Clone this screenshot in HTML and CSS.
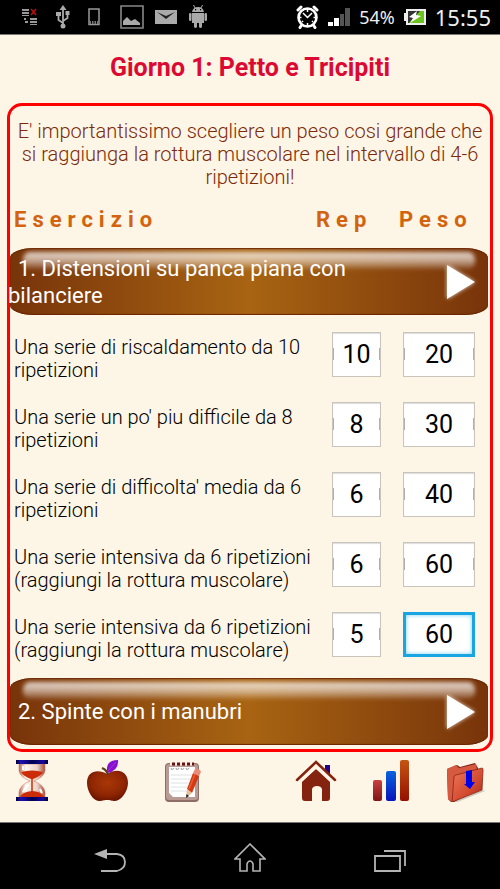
FILE: index.html
```html
<!DOCTYPE html>
<html lang="it">
<head>
  <meta charset="UTF-8" />
  <meta name="viewport" content="width=device-width, initial-scale=1.0"/>
  <title>Giorno 1: Petto e Tricipiti</title>
  <link rel="stylesheet" href="styles.css">
</head>
<body>
  <header class="status-bar">
    <div class="status-left">
      <div class="status-group system-icons">
        <svg width="16" height="18" viewBox="0 0 16 18"><path fill="#999" d="M0 1h7v2H0zM0 4h7v2H0zM0 7h7v1H0zM8 10h7v2H8zM8 13h7v2H8zM8 16h7v1H8zM2 10h2v2H2zM3 13h3v2H3z"/><path stroke="#b01010" stroke-width="1.6" d="M9 1l5 6M14 1L9 7"/></svg>
        <svg width="14" height="24" viewBox="0 0 14 24"><path fill="none" stroke="#aaa" stroke-width="1.8" d="M7 3v18M7 18L2.500 15V9M7 16l4.500-3V8"/><path fill="#aaa" d="M7 0l3.500 5h-7zM0 7h5v4H0zM9.500 6h4v4h-4z"/><circle cx="7" cy="21" r="2.500" fill="#aaa"/></svg>
        <svg width="12" height="18" viewBox="0 0 12 18"><path fill="none" stroke="#999" stroke-width="1.500" d="M1 1h10v15.500H1z"/><path fill="#777" d="M1 13h2v3H1zM4 13h1.500v3H4zM6.500 13H8v3H6.500zM9 13h2v3H9z"/></svg>
      </div>
      <div class="status-group notification-icons">
        <svg width="24" height="24" viewBox="0 0 24 24"><path fill="none" stroke="#888" stroke-width="1.600" d="M1 1h22v22H1z"/><path fill="#aaa" d="M3 20v-4l4-4 4 4 4-2 5 4v2z"/></svg>
        <svg width="22" height="16" viewBox="0 0 22 16"><path fill="#aaa" d="M0 1h22v14H0z"/><path fill="#222" d="M2 3l9 7 9-7-9 4z"/></svg>
        <svg width="20" height="24" viewBox="0 0 20 24"><path fill="#aaa" d="M4 8h12v10H4zM6 17h3v5q-1.500 2-3 0zM11 17h3v5q-1.500 2-3 0zM4 7q1-5 6-5t6 5z"/><rect x="1" y="8" width="2.500" height="8" rx="1.200" fill="#aaa"/><rect x="16.500" y="8" width="2.500" height="8" rx="1.200" fill="#aaa"/><path stroke="#aaa" d="M7 3L5.500 0M13 3l1.500-3"/><path fill="#000" d="M7 4h1.200v1.200H7zM12 4h1.200v1.200H12z"/></svg>
      </div>
    </div>
    <div class="status-group status-right">
      <svg width="23" height="24" viewBox="0 0 23 24"><circle cx="11.500" cy="12.500" r="9" fill="none" stroke="#fff" stroke-width="2.600"/><path fill="none" stroke="#fff" stroke-width="3" stroke-linecap="round" d="M2 5l3-3M21 5l-3-3M5 21l-1 1.500M18 21l1 1.500"/><path fill="none" stroke="#fff" stroke-width="1.500" d="M7 8l4.500 4.500L16 8M11.500 4v3M11.500 18v3M3 12.500h2.500M17.500 12.500H20M6 17l1-1M17 17l-1-1"/></svg>
      <svg width="22" height="20" viewBox="0 0 22 20"><path fill="#fff" d="M0 15h5v4H0zM6 11h5v8H6z"/><path fill="#555" d="M12 7h4v12h-4zM17 1h5v18h-5z"/></svg>
      <span class="battery-level">54%</span>
      <svg width="22" height="16" viewBox="0 0 22 16"><path fill="#eee" d="M2 0h20v16H2zM0 4h2v8H0z"/><path fill="#333" d="M4 2h16v12H4z"/><path fill="#6cc51c" d="M20 2v12H5L16 2z"/><path fill="#fff" d="M13 2l-8 6 4 1-3 5 11-7-5-1z"/></svg>
      <span class="clock">15:55</span>
    </div>
  </header>

  <main>
    <h1 class="page-title">Giorno 1: Petto e Tricipiti</h1>

    <section class="workout">
      <p class="intro">E' importantissimo scegliere un peso cosi grande che si raggiunga la rottura muscolare nel intervallo di 4-6 ripetizioni!</p>

      <table class="exercises">
        <thead>
          <tr>
            <th class="col-name">Esercizio</th>
            <th class="col-rep">Rep</th>
            <th class="col-weight">Peso</th>
          </tr>
        </thead>
        <tbody>
          <tr class="title-row">
            <td colspan="3">
              <button type="button" class="exercise-btn">
                <span class="exercise-name">1. Distensioni su panca piana con bilanciere</span>
                <svg class="arrow" width="28" height="36" viewBox="0 0 28 36"><path fill="#fff" d="M0 1l28 17L0 35z"/></svg>
              </button>
            </td>
          </tr>
          <tr class="set-row">
            <td class="set-name" id="set1">Una serie di riscaldamento da 10 ripetizioni</td>
            <td class="set-rep"><input type="text" class="rep-input" value="10" aria-labelledby="set1"></td>
            <td class="set-weight"><input type="text" class="weight-input" value="20" aria-labelledby="set1"></td>
          </tr>
          <tr class="set-row">
            <td class="set-name" id="set2">Una serie un po' piu difficile da 8 ripetizioni</td>
            <td class="set-rep"><input type="text" class="rep-input" value="8" aria-labelledby="set2"></td>
            <td class="set-weight"><input type="text" class="weight-input" value="30" aria-labelledby="set2"></td>
          </tr>
          <tr class="set-row">
            <td class="set-name" id="set3">Una serie di difficolta' media da 6 ripetizioni</td>
            <td class="set-rep"><input type="text" class="rep-input" value="6" aria-labelledby="set3"></td>
            <td class="set-weight"><input type="text" class="weight-input" value="40" aria-labelledby="set3"></td>
          </tr>
          <tr class="set-row">
            <td class="set-name" id="set4">Una serie intensiva da 6 ripetizioni (raggiungi la rottura muscolare)</td>
            <td class="set-rep"><input type="text" class="rep-input" value="6" aria-labelledby="set4"></td>
            <td class="set-weight"><input type="text" class="weight-input" value="60" aria-labelledby="set4"></td>
          </tr>
          <tr class="set-row">
            <td class="set-name" id="set5">Una serie intensiva da 6 ripetizioni (raggiungi la rottura muscolare)</td>
            <td class="set-rep"><input type="text" class="rep-input" value="5" aria-labelledby="set5"></td>
            <td class="set-weight"><input type="text" class="weight-input active" value="60" aria-labelledby="set5"></td>
          </tr>
          <tr class="title-row">
            <td colspan="3">
              <button type="button" class="exercise-btn">
                <span class="exercise-name">2. Spinte con i manubri</span>
                <svg class="arrow" width="28" height="36" viewBox="0 0 28 36"><path fill="#fff" d="M0 1l28 17L0 35z"/></svg>
              </button>
            </td>
          </tr>
        </tbody>
      </table>
    </section>

    <div class="toolbar">
      <div class="tools">
        <button type="button" class="tool-btn" aria-label="Timer">
          <svg width="42" height="42" viewBox="0 0 42 42">
            <defs>
              <linearGradient id="cap"><stop offset="0" stop-color="#000030"/><stop offset=".15" stop-color="#2010b8"/><stop offset=".5" stop-color="#000050"/><stop offset=".85" stop-color="#1808a0"/><stop offset="1" stop-color="#000020"/></linearGradient>
              <linearGradient id="glass"><stop offset="0" stop-color="#b9654f"/><stop offset=".25" stop-color="#fff5ee"/><stop offset=".7" stop-color="#ecd3c8"/><stop offset="1" stop-color="#a84a35"/></linearGradient>
            </defs>
            <path fill="url(#glass)" stroke="#c8806c" stroke-width=".6" d="M8 4h26v7q-1 6-11 10 10 4 11 11v6H8v-6q1-7 11-11Q9 17 8 11z"/>
            <path fill="#cc2d08" d="M10 12q11-3 22 0-2 4-10 7h-2q-8-3-10-7zM9 37q2-5 12-6 9 0 12 6z"/>
            <path stroke="#cc2d08" stroke-width="1.500" d="M21 18v14"/>
            <path fill="none" stroke="#fff" stroke-width="2" d="M12 6v4M12 32q2-5 6-7M29 29l2 4"/>
            <path fill="url(#cap)" d="M5 0h32v4H5zM5 37h32v4H5z"/>
          </svg>
        </button>
        <button type="button" class="tool-btn" aria-label="Dieta">
          <svg width="42" height="42" viewBox="0 0 42 42">
            <defs><radialGradient id="apple" cx=".5" cy=".4" r=".65"><stop offset="0" stop-color="#a93708"/><stop offset=".6" stop-color="#902703"/><stop offset="1" stop-color="#651200"/></radialGradient></defs>
            <path fill="url(#apple)" d="M21 14C30 8 42 10 42 23c0 8-7 18-13 18-4 0-4-1-8-1s-4 1-8 1C7 41 1 31 1 23 1 10 13 9 21 14z"/>
            <path fill="none" stroke="#59411a" stroke-width="2.200" d="M16 8q5 2 6 7"/>
            <path fill="#8711cf" d="M21 11Q20 0 32 0q1 11-11 13z"/>
            <path stroke="#a84ae0" stroke-width=".7" d="M22 11l8-9"/>
          </svg>
        </button>
        <button type="button" class="tool-btn" aria-label="Note">
          <svg width="42" height="42" viewBox="0 0 42 42">
            <rect x="4" y="3" width="34" height="39" rx="4" fill="#8d6d66"/>
            <rect x="5" y="4" width="32" height="36" rx="3" fill="#b99b94"/>
            <path fill="#fff" d="M8 7h26v30H12l-4-4z"/>
            <path stroke="#dde0e2" d="M10 15h22M10 19h22M10 23h22M10 27h22M10 31h22"/>
            <path stroke="#f8eeea" stroke-width="3" stroke-dasharray="3 2" d="M9 4h25"/>
            <path stroke="#691010" stroke-width="3" stroke-dasharray="3 2" d="M11 4h22"/>
            <path fill="none" stroke="#aaa" stroke-width="1.200" d="M10 8q1 3 3 0M15 8q1 3 3 0M20 8q1 3 3 0M25 8q1 3 3 0"/>
            <path fill="#d13a12" d="M26 29l6-16 6 3-7 17z"/>
            <path fill="#e98b76" d="M32 13l2-4q4-1 6 3l-2 4z"/>
            <path stroke="#f05c32" stroke-width="1.500" d="M28 29l6-15"/>
            <path fill="#e5bf98" d="M26 29l5 4-6 5z"/><path fill="#222" d="M25.500 34l2.500 2-3 2z"/>
          </svg>
        </button>
      </div>
      <div class="tools">
        <button type="button" class="tool-btn" aria-label="Home">
          <svg width="42" height="42" viewBox="0 0 42 42">
            <path fill="#842310" d="M21 9l14 12v17q0 3-3 3h-5V29q-1-3-5-3t-5 3v12h-7q-3 0-3-3V21z"/>
            <path fill="none" stroke="#fdf5e6" stroke-width="7" d="M3 21L21 4l18 17"/>
            <path fill="#220088" d="M30 5h5v10l-5-5z"/>
            <path fill="none" stroke="#842310" stroke-width="2.500" stroke-linecap="round" d="M2 20L21 2l19 18"/>
          </svg>
        </button>
        <button type="button" class="tool-btn" aria-label="Statistiche">
          <svg width="42" height="42" viewBox="0 0 42 42">
            <defs>
              <linearGradient id="bar1" x2="0" y2="1"><stop stop-color="#c94040"/><stop offset="1" stop-color="#801515"/></linearGradient>
              <linearGradient id="bar2" x2="0" y2="1"><stop stop-color="#0864df"/><stop offset="1" stop-color="#0814ba"/></linearGradient>
              <linearGradient id="bar3" x2="0" y2="1"><stop stop-color="#c45512"/><stop offset="1" stop-color="#951000"/></linearGradient>
            </defs>
            <rect x="3" y="20" width="9" height="21" rx="2" fill="url(#bar1)"/>
            <rect x="16" y="11" width="10" height="30" rx="2" fill="url(#bar2)"/>
            <rect x="30" y="0" width="9" height="41" rx="2" fill="url(#bar3)"/>
          </svg>
        </button>
        <button type="button" class="tool-btn" aria-label="Salva">
          <svg width="42" height="42" viewBox="0 0 42 42">
            <defs><linearGradient id="folder" x2="1" y2="1"><stop stop-color="#f07a5c"/><stop offset=".6" stop-color="#d34a30"/><stop offset="1" stop-color="#a02a18"/></linearGradient></defs>
            <path fill="#000" opacity=".18" d="M8 41l30-11 2 1-30 12z"/>
            <path fill="#762015" d="M2 9l10-4 3 2 15-4 3 5 1 20L7 43l-4-4z"/>
            <path fill="#d65a40" d="M2 9l9-4 3 3 17-4 1 5-22 7-3 26-4-3z"/>
            <path fill="url(#folder)" stroke="#8b2515" stroke-width=".8" d="M9 17q0-2 2-2l26-7q1 0 1 2l-1 20L7 42z"/>
            <path fill="#0000e8" d="M21 11l6-1v12h3l-5 7-6-5h2z"/>
          </svg>
        </button>
      </div>
    </div>
  </main>

  <nav class="nav-bar">
    <button type="button" class="nav-btn" aria-label="Indietro">
      <svg width="32" height="30" viewBox="0 0 32 30"><path fill="none" stroke="#b4b4b4" stroke-width="1.800" d="M12 11h11q8 1 8 8t-8 9H7"/><path fill="#b4b4b4" d="M0 11l13-5v10z"/></svg>
    </button>
    <button type="button" class="nav-btn" aria-label="Schermata Home">
      <svg width="32" height="30" viewBox="0 0 32 30"><path fill="none" stroke="#b4b4b4" stroke-width="1.600" d="M16 1l15 15h-5v12h-7v-7q-1-3-3-3t-3 3v7H6V16H1z"/></svg>
    </button>
    <button type="button" class="nav-btn" aria-label="Recenti">
      <svg width="32" height="30" viewBox="0 0 32 30"><path fill="none" stroke="#b4b4b4" stroke-width="1.800" d="M1 13h25v15H1zM10 8h21v15"/></svg>
    </button>
  </nav>
</body>
</html>
```
FILE: styles.css
```css
* {
  margin: 0;
  padding: 0;
  box-sizing: border-box;
}

body {
  font-family: Roboto, sans-serif;
  background: #fdf5e6;
  color: #000;
  min-height: 100vh;
  display: flex;
  flex-direction: column;
}

button {
  border: none;
  background: none;
  font-family: inherit;
  cursor: pointer;
}

svg {
  display: block;
  flex-shrink: 0;
}

/* Status bar */
.status-bar {
  display: flex;
  justify-content: space-between;
  align-items: center;
  height: 35px;
  padding: 0 9px 0 22px;
  background: #000;
  border-bottom: 1px solid #777;
  color: #eee;
  font-family: "Noto Sans", sans-serif;
}

.status-left {
  display: flex;
  gap: 20px;
}

.status-group {
  display: flex;
  align-items: center;
}

.system-icons {
  gap: 18px;
}

.notification-icons {
  gap: 11px;
}

.status-right {
  gap: 9px;
}

.battery-level {
  font-size: 18px;
}

.clock {
  font-size: 22px;
  line-height: 32px;
}

/* Workout */
.page-title {
  padding: 18px 8px 20px;
  color: #dc0a32;
  font-size: 25px;
  font-weight: 700;
  line-height: 30px;
  text-align: center;
}

.workout {
  margin: 0 7px;
  border: 3px solid #f00;
  border-radius: 15px;
}

.intro {
  padding-top: 14px;
  color: #7b2b08;
  font-size: 20px;
  font-weight: 350;
  line-height: 23px;
  text-align: center;
}

.exercises {
  width: 100%;
  border-collapse: collapse;
  table-layout: fixed;
}

.exercises th {
  padding: 17px 0 5px;
  color: #d2640f;
  font-size: 22px;
  font-weight: 700;
  line-height: 28px;
  letter-spacing: 6px;
  text-align: left;
}

.exercises .col-name {
  padding-left: 4px;
}

.col-rep {
  width: 83px;
}

.col-weight {
  width: 91px;
}

.title-row td {
  padding: 9px 2px 4px 0;
}

.exercise-btn {
  position: relative;
  display: flex;
  align-items: center;
  justify-content: space-between;
  width: 100%;
  height: 67px;
  padding-right: 13px;
  border-radius: 24px / 10px;
  background: linear-gradient(90deg, #78340a, #a86412 50%, #78340a);
  box-shadow: inset 0 1px 1px #6b2400, inset 0 -1px 1px #6b2400;
  color: #fff;
  font-size: 22px;
  line-height: 27px;
  text-align: left;
}

/* glossy highlight */
.exercise-btn::before {
  content: "";
  position: absolute;
  top: 4px;
  left: 13px;
  right: 13px;
  height: 17px;
  border-radius: 7px;
  background: linear-gradient(rgba(255, 255, 255, 0.8), rgba(255, 255, 255, 0.55) 50%, rgba(255, 255, 255, 0.1));
  filter: blur(2px);
}

.exercise-name {
  position: relative;
  flex: 1;
  margin-left: -2px;
  padding-right: 20px;
  text-indent: 10px;
}

.arrow {
  position: relative;
  filter: drop-shadow(0 0 2px rgba(255, 255, 255, 0.8));
}

.set-row td {
  height: 70px;
  vertical-align: middle;
}

.set-row .set-name {
  padding: 10px 0 0 4px;
  font-size: 20px;
  font-weight: 350;
  line-height: 23px;
}

.set-rep {
  padding-left: 16px;
}

.set-weight {
  padding-left: 4px;
}

.rep-input,
.weight-input {
  display: block;
  height: 45px;
  border: 1px solid #c9c4bc;
  background:
    linear-gradient(#aaa, #aaa) left center / 1px 12px no-repeat,
    linear-gradient(#aaa, #aaa) right center / 1px 12px no-repeat,
    #fff;
  box-shadow: inset 0 1px 1px #ddd;
  font-family: inherit;
  font-size: 25px;
  text-align: center;
  outline: none;
}

.rep-input {
  width: 49px;
}

.weight-input {
  width: 72px;
}

.weight-input.active,
.weight-input:focus {
  border: 3px solid #19a5e1;
  background: #fff;
  box-shadow: inset 0 0 4px #7accee;
}

/* Toolbar */
.toolbar {
  display: flex;
  justify-content: space-between;
  padding: 8px 13px 19px 11px;
}

.tools {
  display: flex;
  gap: 33px;
}

/* Android navigation */
.nav-bar {
  display: grid;
  grid-template-columns: repeat(3, 1fr);
  align-items: center;
  justify-items: center;
  height: 67px;
  margin-top: auto;
  padding: 4px 8% 0;
  background: #000;
  border-top: 1px solid #777;
}
```
